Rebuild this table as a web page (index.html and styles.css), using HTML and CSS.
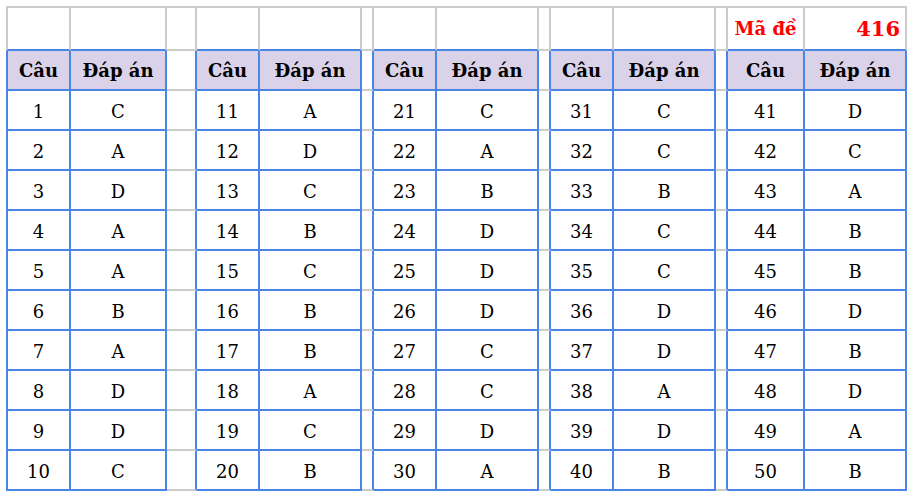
FILE: index.html
```html
<!DOCTYPE html>
<html lang="vi">
<head>
<meta charset="utf-8">
<title>Đáp án</title>
<link rel="stylesheet" href="styles.css">
</head>
<body>
<table class="sheet">
  <colgroup>
    <col class="w-first"><col class="w-ans"><col class="w-gap-wide">
    <col class="w-num"><col class="w-ans2"><col class="w-gap">
    <col class="w-num"><col class="w-ans2"><col class="w-gap">
    <col class="w-num"><col class="w-ans2"><col class="w-gap">
    <col class="w-num-last"><col class="w-ans2">
  </colgroup>
  <tr class="top">
    <td class="first tb"></td><td class="tb"></td><td class="gp"></td>
    <td class="tb"></td><td class="tb"></td><td class="gp"></td>
    <td class="tb"></td><td class="tb"></td><td class="gp"></td>
    <td class="tb"></td><td class="tb"></td><td class="gp"></td>
    <td class="tb code-label">Mã đề</td><td class="tb code-value">416</td>
  </tr>
  <tr class="head">
    <td class="first">Câu</td><td class="end">Đáp án</td><td class="gap"></td>
    <td>Câu</td><td class="end">Đáp án</td><td class="gap"></td>
    <td>Câu</td><td class="end">Đáp án</td><td class="gap"></td>
    <td>Câu</td><td class="end">Đáp án</td><td class="gap"></td>
    <td>Câu</td><td class="end">Đáp án</td>
  </tr>
  <tr><td class="first">1</td><td class="end">C</td><td class="gap"></td><td>11</td><td class="end">A</td><td class="gap"></td><td>21</td><td class="end">C</td><td class="gap"></td><td>31</td><td class="end">C</td><td class="gap"></td><td>41</td><td class="end">D</td></tr>
  <tr><td class="first">2</td><td class="end">A</td><td class="gap"></td><td>12</td><td class="end">D</td><td class="gap"></td><td>22</td><td class="end">A</td><td class="gap"></td><td>32</td><td class="end">C</td><td class="gap"></td><td>42</td><td class="end">C</td></tr>
  <tr><td class="first">3</td><td class="end">D</td><td class="gap"></td><td>13</td><td class="end">C</td><td class="gap"></td><td>23</td><td class="end">B</td><td class="gap"></td><td>33</td><td class="end">B</td><td class="gap"></td><td>43</td><td class="end">A</td></tr>
  <tr><td class="first">4</td><td class="end">A</td><td class="gap"></td><td>14</td><td class="end">B</td><td class="gap"></td><td>24</td><td class="end">D</td><td class="gap"></td><td>34</td><td class="end">C</td><td class="gap"></td><td>44</td><td class="end">B</td></tr>
  <tr><td class="first">5</td><td class="end">A</td><td class="gap"></td><td>15</td><td class="end">C</td><td class="gap"></td><td>25</td><td class="end">D</td><td class="gap"></td><td>35</td><td class="end">C</td><td class="gap"></td><td>45</td><td class="end">B</td></tr>
  <tr><td class="first">6</td><td class="end">B</td><td class="gap"></td><td>16</td><td class="end">B</td><td class="gap"></td><td>26</td><td class="end">D</td><td class="gap"></td><td>36</td><td class="end">D</td><td class="gap"></td><td>46</td><td class="end">D</td></tr>
  <tr><td class="first">7</td><td class="end">A</td><td class="gap"></td><td>17</td><td class="end">B</td><td class="gap"></td><td>27</td><td class="end">C</td><td class="gap"></td><td>37</td><td class="end">D</td><td class="gap"></td><td>47</td><td class="end">B</td></tr>
  <tr><td class="first">8</td><td class="end">D</td><td class="gap"></td><td>18</td><td class="end">A</td><td class="gap"></td><td>28</td><td class="end">C</td><td class="gap"></td><td>38</td><td class="end">A</td><td class="gap"></td><td>48</td><td class="end">D</td></tr>
  <tr><td class="first">9</td><td class="end">D</td><td class="gap"></td><td>19</td><td class="end">C</td><td class="gap"></td><td>29</td><td class="end">D</td><td class="gap"></td><td>39</td><td class="end">D</td><td class="gap"></td><td>49</td><td class="end">A</td></tr>
  <tr><td class="first">10</td><td class="end">C</td><td class="gap"></td><td>20</td><td class="end">B</td><td class="gap"></td><td>30</td><td class="end">A</td><td class="gap"></td><td>40</td><td class="end">B</td><td class="gap"></td><td>50</td><td class="end">B</td></tr>
</table>
</body>
</html>
```

FILE: styles.css
```css
html, body {
  margin: 0;
  padding: 0;
  background: #ffffff;
}

body {
  padding: 6px;
  font-family: "DejaVu Serif", "Liberation Serif", serif;
  font-size: 18px;
  color: #000000;
}

.sheet {
  border-collapse: separate;
  border-spacing: 0;
  table-layout: fixed;
  width: 901px;
}

.w-first { width: 65px; }
.w-ans { width: 96px; }
.w-gap-wide { width: 30px; }
.w-num { width: 63px; }
.w-num-last { width: 77px; }
.w-ans2 { width: 102px; }
.w-gap { width: 12px; }

.sheet td {
  box-sizing: border-box;
  padding: 0;
  height: 40px;
  text-align: center;
  vertical-align: middle;
  border-right: 2px solid #4a86e8;
  border-bottom: 2px solid #4a86e8;
  white-space: nowrap;
  padding-top: 2px;
}

.sheet td.first {
  border-left: 2px solid #4a86e8;
}

.sheet td.gap {
  border-bottom-color: #cccccc;
}

/* top row: spreadsheet gridlines */
.sheet .top td {
  height: 45px;
  padding-top: 0;
  border-top: 2px solid #cccccc;
  border-right-color: #cccccc;
}

.sheet .top td.first {
  border-left-color: #cccccc;
}

.sheet .top td.gp {
  border-bottom-color: #cccccc;
}

.sheet .head td {
  background: #d9d2e9;
  font-weight: bold;
  padding-top: 0;
}

.sheet .head td.gap {
  background: #ffffff;
}

.code-label,
.code-value {
  color: #ff0000;
  font-weight: bold;
}

.sheet td.code-value {
  text-align: right;
  padding-right: 5px;
  font-size: 21px;
}
```
